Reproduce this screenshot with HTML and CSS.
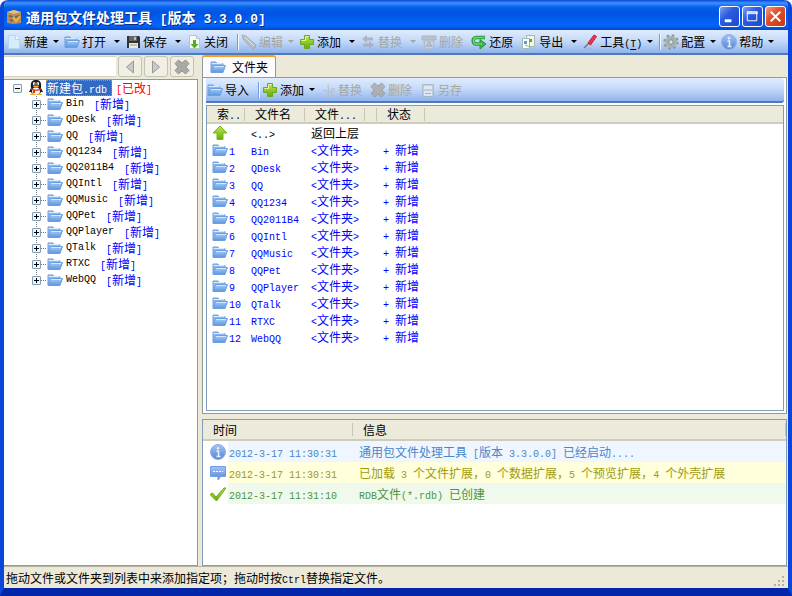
FILE: index.html
```html
<!DOCTYPE html>
<html lang="zh-CN">
<head>
<meta charset="UTF-8" />
<meta name="viewport" content="width=device-width, initial-scale=1" />
<title>通用包文件处理工具</title>
<link rel="stylesheet" href="styles.css">
</head>
<body>

<!-- Shared icons -->
<svg class="defs" aria-hidden="true">
  <defs>
    <linearGradient id="gFolder" x1="0" y1="0" x2="0" y2="1"><stop offset="0" stop-color="#a9cdf6"/><stop offset="1" stop-color="#5b96e0"/></linearGradient>
    <linearGradient id="gGreen" x1="0" y1="0" x2="0" y2="1"><stop offset="0" stop-color="#c3e64e"/><stop offset="1" stop-color="#5fae08"/></linearGradient>
    <linearGradient id="gInfo" x1="0" y1="0" x2="0" y2="1"><stop offset="0" stop-color="#a5c3f2"/><stop offset="1" stop-color="#5686d8"/></linearGradient>
  </defs>
  <symbol id="folder" viewBox="0 0 16 16">
    <path d="M1 13V3h5l1 1.500h6V7" fill="#8db8ee" stroke="#6c9fe0"/>
    <path d="M1.500 4.500h11" stroke="#d8e9fc"/>
    <path d="M1 13.500 3.500 6.500h12L13 13.500z" fill="url(#gFolder)" stroke="#6a9fe2"/>
    <path d="M4 7.500h10" stroke="#d4e7fd"/>
  </symbol>
  <symbol id="plus" viewBox="0 0 16 16">
    <path d="M5.500 1.500h5v4h4v5h-4v4h-5v-4h-4v-5h4z" fill="url(#gGreen)" stroke="#6da81c"/>
    <path d="M6.500 2.500h3M2.500 6.500h4v-4" stroke="#e3f5a0" fill="none"/>
  </symbol>
  <symbol id="cross" viewBox="0 0 16 16">
    <path d="M1 4.500 4.500 1 8 4l3.500-3L15 4.500 12 8l3 3.500-3.500 3.500L8 12l-3.500 3L1 11.500 4 8z" fill="#a9a9a5" stroke="#969692"/>
  </symbol>
  <symbol id="info" viewBox="0 0 16 16">
    <circle cx="8" cy="8" r="7.500" fill="url(#gInfo)" stroke="#8fb0e8"/>
    <path d="M6.500 7H8.500v5M6.500 12.500h4" stroke="#e8f1ff" stroke-width="1.500" fill="none"/><circle cx="8" cy="4.200" r="1.200" fill="#e8f1ff"/>
  </symbol>
</svg>

<div class="window">
  <header class="titlebar">
    <svg class="icon" viewBox="0 0 16 16"><path d="M1 3l7-2 7 2v11l-7 1-7-1z" fill="#b98f58"/><path d="M1 3l7 2 7-2-7-2z" fill="#e0c08b"/><path d="M3 7l4 1M9 8l5-1M4 11l3 1" stroke="#6d6a66" stroke-width="2"/><path d="M7 8l3 4 4-5" stroke="#f2b436" stroke-width="2" fill="none"/></svg>
    <h1>通用包文件处理工具<span class="en"> [</span>版本<span class="en"> 3.3.0.0]</span></h1>
    <div class="win-btns">
      <button class="win-btn" aria-label="最小化"><svg viewBox="0 0 20 20"><path d="M5 13h7v3H5z" fill="#fff"/></svg></button>
      <button class="win-btn" aria-label="最大化"><svg viewBox="0 0 20 20"><path d="M4.500 5.500h10v9h-10zM4 5h11v2H4" fill="none" stroke="#fff"/></svg></button>
      <button class="win-btn close" aria-label="关闭窗口"><svg viewBox="0 0 20 20"><path d="M5 5l10 10M15 5 5 15" stroke="#fff" stroke-width="2"/></svg></button>
    </div>
  </header>

  <nav class="toolbar">
    <button class="tool menu"><svg class="icon" viewBox="0 0 16 16"><path d="M2.500 1.500h7l4 4v9h-11z" fill="#d6ecfb" stroke="#b5d6f0"/><path d="M9.500 1.500v4h4" fill="#f4fbff" stroke="#b5d6f0"/></svg>新建</button>
    <button class="tool split"><svg class="icon"><use href="#folder"/></svg>打开</button>
    <button class="tool split"><svg class="icon" viewBox="0 0 16 16"><path d="M2 2h12l1 1v11H2z" fill="#333"/><path d="M4 2h8v5H4z" fill="#666"/><path d="M9 3h2v3H9z" fill="#bbb"/><path d="M4 9h9v5H4z" fill="#e8e8e8"/><path d="M5 11h7" stroke="#999"/></svg>保存</button>
    <button class="tool"><svg class="icon" viewBox="0 0 16 16"><path d="M3.500 1.500h7l3 3v10h-10z" fill="#f7faf7" stroke="#b9c6c4"/><path d="M10.500 1.500v3h3" fill="#dce6e8" stroke="#b9c6c4"/><path d="M7 6h3v4h2.500l-4 4.500-4-4.500H7z" fill="#4fb022"/></svg>关闭</button>
    <span class="sep"></span>
    <button class="tool menu" disabled><svg class="icon" viewBox="0 0 16 16"><path d="M1 1l4 1 10 9-1 3-3 .5L2 5z" fill="#b5b9bf" stroke="#9ea4ac"/><path d="M4 3l9 9" stroke="#e0e3e7"/></svg>编辑</button>
    <button class="tool split"><svg class="icon"><use href="#plus"/></svg>添加</button>
    <button class="tool split" disabled><svg class="icon" viewBox="0 0 16 16"><path d="M13 5H7M3 11h6" stroke="#a3adb9" stroke-width="3" fill="none"/><path d="M2 5l5-4v8zM14 11l-5-4v8z" fill="#a3adb9"/></svg>替换</button>
    <button class="tool" disabled><svg class="icon" viewBox="0 0 16 16"><path d="M1 2h14v4H1z" fill="#b5bbc3" stroke="#a5abb5"/><path d="M3 7h10l-1 8H4z" fill="#cdd3da" stroke="#a9b1bb"/><path d="M8 8l2.500 4h-5z" fill="none" stroke="#8e98a5"/></svg>删除</button>
    <button class="tool"><svg class="icon" viewBox="0 0 16 16"><path d="M14 3.500H5.500C1 3.500 1 10 5.500 10H10" fill="none" stroke="#249a35" stroke-width="3.500"/><path d="M9 5.500l6 4.500-6 5z" fill="#39b54a" stroke="#249a35"/><path d="M13.500 3.500H5.500C1.500 3.500 1.500 10 5.500 10H11" fill="none" stroke="#71d676" stroke-width="1.500"/></svg>还原</button>
    <button class="tool split"><svg class="icon" viewBox="0 0 16 16"><path d="M5.500 1.500h8v11h-8z" fill="#f1f5ef" stroke="#a9b9ad"/><path d="M1.500 4.500h7v10h-7z" fill="#fff" stroke="#a9b9ad"/><path d="M3 7h3v3H3z" fill="#4ba3e5"/><path d="M8 5h3v3H8z" fill="#4eb335"/><path d="M4 11l5 2" stroke="#7fc253"/></svg>导出</button>
    <button class="tool menu"><svg class="icon" viewBox="0 0 16 16"><path d="M2 14l6-6" stroke="#777" stroke-width="1.500"/><path d="M6 9l6-8 2.500 1.500L8.500 11z" fill="#e9374a" stroke="#c11f34"/><path d="M2 15h8" stroke="#a9b5c7"/></svg><span>工具<span class="en">(<u>T</u>)</span></span></button>
    <span class="sep"></span>
    <button class="tool menu"><svg class="icon" viewBox="0 0 16 16"><circle cx="8" cy="8" r="6.500" fill="none" stroke="#8f9994" stroke-width="2.500" stroke-dasharray="2.500 2.600"/><circle cx="8" cy="8" r="4.300" fill="none" stroke="#a9b1ac" stroke-width="3.500"/><circle cx="8" cy="8" r="2.300" fill="#cfe0f5" stroke="#7f8985"/></svg>配置</button>
    <button class="tool menu"><svg class="icon"><use href="#info"/></svg>帮助</button>
  </nav>

  <main class="work">
    <aside class="side">
      <div class="search">
        <input type="text" aria-label="搜索">
        <button aria-label="上一个"><svg viewBox="0 0 16 16"><path d="M11.500 2v12l-7-6z" fill="#c9c9c6" stroke="#999"/></svg></button>
        <button aria-label="下一个"><svg viewBox="0 0 16 16"><path d="M4.500 2v12l7-6z" fill="#c9c9c6" stroke="#999"/></svg></button>
        <button aria-label="清除"><svg><use href="#cross"/></svg></button>
      </div>
      <div class="tree">
        <div class="node root">
          <button class="expander open" aria-label="折叠"></button>
          <svg class="icon" viewBox="0 0 16 16"><path d="M3 8C2 1 5 0 8 0s6 1 5 8l2 4-2 0c-1 3-9 3-10 0l-2 0z" fill="#1d1d1d"/><ellipse cx="8" cy="11" rx="4" ry="3.500" fill="#fff"/><ellipse cx="6.200" cy="3.800" rx="1.300" ry="1.800" fill="#fff"/><ellipse cx="9.800" cy="3.800" rx="1.300" ry="1.800" fill="#fff"/><circle cx="6.500" cy="4" r=".6"/><circle cx="9.500" cy="4" r=".6"/><ellipse cx="8" cy="6.500" rx="3" ry="1" fill="#f7a71c"/><path d="M3 8c3 2 7 2 10 0v1.500c-2 1.500-5 1.500-6 1.200V13H5v-2.500L3 9.500z" fill="#e3291c"/><path d="M2 15c0-2 5-2 5.500 0zM8.500 15c.5-2 5.500-2 5.500 0z" fill="#f7a71c"/></svg>
          <span class="selected">新建包<span class="en">.rdb</span></span>
          <span class="changed"><span class="en">[</span>已改<span class="en">]</span></span>
        </div>
        <ul>
          <li class="node"><button class="expander" aria-label="展开"></button><svg class="icon"><use href="#folder"/></svg><span class="en">Bin</span><span class="added"><span class="en">[</span>新增<span class="en">]</span></span></li>
          <li class="node"><button class="expander" aria-label="展开"></button><svg class="icon"><use href="#folder"/></svg><span class="en">QDesk</span><span class="added"><span class="en">[</span>新增<span class="en">]</span></span></li>
          <li class="node"><button class="expander" aria-label="展开"></button><svg class="icon"><use href="#folder"/></svg><span class="en">QQ</span><span class="added"><span class="en">[</span>新增<span class="en">]</span></span></li>
          <li class="node"><button class="expander" aria-label="展开"></button><svg class="icon"><use href="#folder"/></svg><span class="en">QQ1234</span><span class="added"><span class="en">[</span>新增<span class="en">]</span></span></li>
          <li class="node"><button class="expander" aria-label="展开"></button><svg class="icon"><use href="#folder"/></svg><span class="en">QQ2011B4</span><span class="added"><span class="en">[</span>新增<span class="en">]</span></span></li>
          <li class="node"><button class="expander" aria-label="展开"></button><svg class="icon"><use href="#folder"/></svg><span class="en">QQIntl</span><span class="added"><span class="en">[</span>新增<span class="en">]</span></span></li>
          <li class="node"><button class="expander" aria-label="展开"></button><svg class="icon"><use href="#folder"/></svg><span class="en">QQMusic</span><span class="added"><span class="en">[</span>新增<span class="en">]</span></span></li>
          <li class="node"><button class="expander" aria-label="展开"></button><svg class="icon"><use href="#folder"/></svg><span class="en">QQPet</span><span class="added"><span class="en">[</span>新增<span class="en">]</span></span></li>
          <li class="node"><button class="expander" aria-label="展开"></button><svg class="icon"><use href="#folder"/></svg><span class="en">QQPlayer</span><span class="added"><span class="en">[</span>新增<span class="en">]</span></span></li>
          <li class="node"><button class="expander" aria-label="展开"></button><svg class="icon"><use href="#folder"/></svg><span class="en">QTalk</span><span class="added"><span class="en">[</span>新增<span class="en">]</span></span></li>
          <li class="node"><button class="expander" aria-label="展开"></button><svg class="icon"><use href="#folder"/></svg><span class="en">RTXC</span><span class="added"><span class="en">[</span>新增<span class="en">]</span></span></li>
          <li class="node"><button class="expander" aria-label="展开"></button><svg class="icon"><use href="#folder"/></svg><span class="en">WebQQ</span><span class="added"><span class="en">[</span>新增<span class="en">]</span></span></li>
        </ul>
      </div>
    </aside>

    <section class="content">
      <button class="tab"><svg class="icon"><use href="#folder"/></svg>文件夹</button>
      <div class="page">
        <div class="toolbar inner">
          <button class="tool"><svg class="icon"><use href="#folder"/></svg>导入</button>
          <span class="sep"></span>
          <button class="tool menu"><svg class="icon"><use href="#plus"/></svg>添加</button>
          <button class="tool" disabled><svg class="icon" viewBox="0 0 16 16"><path d="M8 2l1 8M3 8l8 2" stroke="#b5c0cd" stroke-width="1.500"/><circle cx="10" cy="12" r="2" fill="none" stroke="#b5c0cd" stroke-width="1.500"/><circle cx="13" cy="8" r="1.500" fill="none" stroke="#b5c0cd" stroke-width="1.500"/></svg>替换</button>
          <button class="tool" disabled><svg class="icon"><use href="#cross"/></svg>删除</button>
          <button class="tool" disabled><svg class="icon" viewBox="0 0 16 16"><path d="M2.500 2.500h11v12h-11z" fill="#c3cad3" stroke="#a9b3bf"/><path d="M4 4h8v3H4zM4 9h8v5H4z" fill="#e6ecf3"/><path d="M5 11.500h6" stroke="#a9b3bf"/></svg>另存</button>
        </div>
        <div class="list">
          <table class="files">
            <colgroup><col class="c-index"><col class="c-name"><col class="c-type"><col class="c-blank"><col class="c-state"><col></colgroup>
            <thead>
              <tr><th>索<span class="en">..</span></th><th>文件名</th><th>文件<span class="en">...</span></th><th></th><th>状态</th><th></th></tr>
            </thead>
            <tbody>
              <tr class="up"><td><svg class="icon" viewBox="0 0 16 16"><path d="M8 1l7 7h-4v6.500H5V8H1z" fill="url(#gGreen)" stroke="#78b81c"/></svg></td><td><span class="en">&lt;..&gt;</span></td><td>返回上层</td><td></td><td></td><td></td></tr>
              <tr><td><svg class="icon"><use href="#folder"/></svg><span class="en">1</span></td><td><span class="en">Bin</span></td><td><span class="en">&lt;</span>文件夹<span class="en">&gt;</span></td><td></td><td><span class="en">+ </span>新增</td><td></td></tr>
              <tr><td><svg class="icon"><use href="#folder"/></svg><span class="en">2</span></td><td><span class="en">QDesk</span></td><td><span class="en">&lt;</span>文件夹<span class="en">&gt;</span></td><td></td><td><span class="en">+ </span>新增</td><td></td></tr>
              <tr><td><svg class="icon"><use href="#folder"/></svg><span class="en">3</span></td><td><span class="en">QQ</span></td><td><span class="en">&lt;</span>文件夹<span class="en">&gt;</span></td><td></td><td><span class="en">+ </span>新增</td><td></td></tr>
              <tr><td><svg class="icon"><use href="#folder"/></svg><span class="en">4</span></td><td><span class="en">QQ1234</span></td><td><span class="en">&lt;</span>文件夹<span class="en">&gt;</span></td><td></td><td><span class="en">+ </span>新增</td><td></td></tr>
              <tr><td><svg class="icon"><use href="#folder"/></svg><span class="en">5</span></td><td><span class="en">QQ2011B4</span></td><td><span class="en">&lt;</span>文件夹<span class="en">&gt;</span></td><td></td><td><span class="en">+ </span>新增</td><td></td></tr>
              <tr><td><svg class="icon"><use href="#folder"/></svg><span class="en">6</span></td><td><span class="en">QQIntl</span></td><td><span class="en">&lt;</span>文件夹<span class="en">&gt;</span></td><td></td><td><span class="en">+ </span>新增</td><td></td></tr>
              <tr><td><svg class="icon"><use href="#folder"/></svg><span class="en">7</span></td><td><span class="en">QQMusic</span></td><td><span class="en">&lt;</span>文件夹<span class="en">&gt;</span></td><td></td><td><span class="en">+ </span>新增</td><td></td></tr>
              <tr><td><svg class="icon"><use href="#folder"/></svg><span class="en">8</span></td><td><span class="en">QQPet</span></td><td><span class="en">&lt;</span>文件夹<span class="en">&gt;</span></td><td></td><td><span class="en">+ </span>新增</td><td></td></tr>
              <tr><td><svg class="icon"><use href="#folder"/></svg><span class="en">9</span></td><td><span class="en">QQPlayer</span></td><td><span class="en">&lt;</span>文件夹<span class="en">&gt;</span></td><td></td><td><span class="en">+ </span>新增</td><td></td></tr>
              <tr><td><svg class="icon"><use href="#folder"/></svg><span class="en">10</span></td><td><span class="en">QTalk</span></td><td><span class="en">&lt;</span>文件夹<span class="en">&gt;</span></td><td></td><td><span class="en">+ </span>新增</td><td></td></tr>
              <tr><td><svg class="icon"><use href="#folder"/></svg><span class="en">11</span></td><td><span class="en">RTXC</span></td><td><span class="en">&lt;</span>文件夹<span class="en">&gt;</span></td><td></td><td><span class="en">+ </span>新增</td><td></td></tr>
              <tr><td><svg class="icon"><use href="#folder"/></svg><span class="en">12</span></td><td><span class="en">WebQQ</span></td><td><span class="en">&lt;</span>文件夹<span class="en">&gt;</span></td><td></td><td><span class="en">+ </span>新增</td><td></td></tr>
            </tbody>
          </table>
        </div>
      </div>

      <div class="log">
        <table>
          <colgroup><col class="c-icon"><col class="c-time"><col></colgroup>
          <thead>
            <tr><th colspan="2">时间</th><th>信息</th></tr>
          </thead>
          <tbody>
            <tr class="info"><td><svg class="icon"><use href="#info"/></svg></td><td><span class="en">2012-3-17 11:30:31</span></td><td>通用包文件处理工具<span class="en"> [</span>版本<span class="en"> 3.3.0.0] </span>已经启动<span class="en">....</span></td></tr>
            <tr class="loaded"><td><svg class="icon" viewBox="0 0 16 16"><path d="M.5 1.500h15v10h-5L8 15v-3.500H.5z" fill="url(#gInfo)" stroke="#6f9ce6"/><path d="M3 6.500h10" stroke="#fff" stroke-dasharray="2 1"/></svg></td><td><span class="en">2012-3-17 11:30:31</span></td><td>已加载<span class="en"> 3 </span>个文件扩展，<span class="en">0 </span>个数据扩展，<span class="en">5 </span>个预览扩展，<span class="en">4 </span>个外壳扩展</td></tr>
            <tr class="done"><td><svg class="icon" viewBox="0 0 16 16"><path d="M0 8.500 2.500 7 6 11l8-9 2 0L6.500 15z" fill="url(#gGreen)" stroke="#6dab12"/></svg></td><td><span class="en">2012-3-17 11:31:10</span></td><td><span class="en">RDB</span>文件<span class="en">(*.rdb) </span>已创建</td></tr>
          </tbody>
        </table>
      </div>
    </section>
  </main>

  <footer class="statusbar">
    <span>拖动文件或文件夹到列表中来添加指定项；拖动时按<span class="en">Ctrl</span>替换指定文件。</span>
    <svg class="grip" viewBox="0 0 12 12"><path d="M8 0h2v2H8zM4 4h2v2H4zM8 4h2v2H8zM0 8h2v2H0zM4 8h2v2H4zM8 8h2v2H8z" fill="#b5b19d"/></svg>
  </footer>
</div>

</body>
</html>
```

FILE: styles.css
```css
* {
  box-sizing: border-box;
}

body {
  margin: 0;
  background: #fff;
  font: 12px/16px "Noto Sans CJK SC", sans-serif;
  color: #000;
}

button, input {
  font: inherit;
  color: inherit;
  margin: 0;
  padding: 0;
}

.defs {
  position: absolute;
  width: 0;
  height: 0;
}

.icon {
  width: 16px;
  height: 16px;
  flex: none;
}

/* Latin text is half as wide as a Chinese character */
.en {
  font-family: "Liberation Mono", monospace;
  font-size: 10px;
  line-height: 10px;
  white-space: pre;
}

u {
  text-underline-offset: 2px;
}

/* Window frame */
.window {
  display: flex;
  flex-direction: column;
  height: 100vh;
  border: 4px solid #0a45dc;
  border-width: 0 4px 8px;
  border-bottom-color: #0326a8;
  border-radius: 8px 8px 0 0;
  background: #ece9d8;
  overflow: hidden;
}

.titlebar {
  display: flex;
  flex: none;
  align-items: center;
  gap: 4px;
  height: 30px;
  margin: 0 -4px;
  padding: 3px 6px 0;
  background: linear-gradient(#0a45d6, #3c92ff 3px, #0560ec 7px, #0054e3 14px, #0366fd 25px, #0148d0);
}

.titlebar h1 {
  flex: 1;
  margin: 0;
  font-size: 14px;
  line-height: 20px;
  color: #fff;
  text-shadow: 1px 1px #0a2a80;
}

.titlebar h1 .en {
  font-size: 13px;
}

.win-btns {
  display: flex;
  gap: 2px;
}

.win-btn {
  width: 21px;
  height: 21px;
  border: 1px solid #fff;
  border-radius: 3px;
  background: linear-gradient(135deg, #7da2f2, #2a5be0 40%, #1c49cf);
}

.win-btn.close {
  background: linear-gradient(135deg, #f0a088, #e2502a 40%, #c63a12);
}

.win-btn svg {
  display: block;
  width: 19px;
  height: 19px;
}

/* Toolbars */
.toolbar {
  display: flex;
  flex: none;
  height: 25px;
  padding-left: 2px;
  border-bottom: 2px solid #5078bd;
  background: linear-gradient(#e0ecfe, #c3d8f8 50%, #8fb3ec);
}

.tool {
  display: flex;
  align-items: center;
  gap: 2px;
  padding-right: 8px;
  border: 0;
  background: none;
  white-space: nowrap;
}

.tool:disabled {
  color: #a5a69f;
}

.tool:disabled .icon {
  opacity: 0.8;
}

.tool.menu, .tool.split {
  padding-right: 5px;
}

.tool.menu::after, .tool.split::after {
  content: "";
  margin-left: 3px;
  border: 3px solid transparent;
  border-top-color: currentColor;
  border-bottom: 0;
}

.tool.split::after {
  margin-left: 6px;
}

.sep {
  width: 2px;
  height: 16px;
  margin: 4px 2px 0 1px;
  border-left: 1px solid #6f9be0;
  border-right: 1px solid #f4f8ff;
}

/* Left side */
.work {
  display: flex;
  flex: 1;
  gap: 4px;
  min-height: 0;
}

.side {
  display: flex;
  flex-direction: column;
  gap: 2px;
  width: 194px;
}

.search {
  display: flex;
  gap: 2px;
  height: 22px;
  padding: 1px 4px 0 0;
}

.search input {
  flex: 1;
  min-width: 0;
  border: 1px solid #d5d2c3;
  border-width: 1px 0;
  background: #fff;
}

.search button {
  width: 24px;
  border: 1px solid #c5c2b2;
  border-radius: 3px;
  background: #f1efe4;
}

.search svg {
  display: block;
  width: 16px;
  height: 16px;
  margin: auto;
}

.tree {
  flex: 1;
  border: 1px solid #7f9db9;
  border-left: 0;
  background: #fff;
  overflow: hidden;
}

.tree ul {
  margin: 0 0 0 28px;
  padding: 0;
  list-style: none;
}

.node {
  display: flex;
  align-items: center;
  height: 16px;
  white-space: nowrap;
}

.node.root {
  padding-left: 9px;
}

.expander {
  width: 9px;
  height: 9px;
  border: 1px solid #7f9db9;
  border-radius: 1px;
  background:
    linear-gradient(#000, #000) center / 5px 1px no-repeat,
    linear-gradient(#000, #000) center / 1px 5px no-repeat,
    #f5f4ee;
}

.expander.open {
  margin-right: 6px;
  background: linear-gradient(#000, #000) center / 5px 1px no-repeat, #f5f4ee;
}

/* Dotted branch lines */
.tree li {
  background: repeating-linear-gradient(#777 0 1px, transparent 1px 2px) 4px 0 / 1px 16px no-repeat;
}

.tree li:last-child {
  background-size: 1px 8px;
}

.tree li::before {
  content: "";
  order: 1;
  width: 5px;
  margin-right: 1px;
  border-top: 1px dotted #777;
}

.tree li > :not(.expander) {
  order: 2;
}

.tree li > .icon + .en {
  margin-left: 3px;
}

.selected {
  margin-left: 2px;
  padding: 0 5px 0 1px;
  outline: 1px dotted #d08a3a;
  outline-offset: -1px;
  background: #316ac5;
  color: #fff;
}

.changed {
  margin-left: 4px;
  color: #f00;
}

.added {
  margin-left: 10px;
  color: #00f;
}

/* Folder page */
.content {
  display: flex;
  flex: 1;
  flex-direction: column;
  min-width: 0;
  padding-right: 1px;
}

.tab {
  display: flex;
  flex: none;
  align-self: flex-start;
  align-items: center;
  gap: 6px;
  height: 22px;
  padding: 0 7px;
  border: 1px solid #919b9c;
  border-width: 2px 1px 0;
  border-top-color: #f9a01b;
  border-radius: 3px 3px 0 0;
  background: #fcfcfe;
}

.page {
  display: flex;
  flex: 1;
  flex-direction: column;
  gap: 2px;
  padding: 0 2px 2px 3px;
  border: 1px solid #919b9c;
  background: #fcfcfe;
}

.toolbar.inner {
  padding-left: 1px;
  border-radius: 0 3px 3px 0;
}

.list {
  flex: 1;
  border: 1px solid #7f9db9;
  background: #fff;
  overflow: hidden;
}

table {
  width: 100%;
  border-collapse: separate;
  border-spacing: 0;
  table-layout: fixed;
}

th {
  height: 18px;
  padding: 0 0 0 10px;
  border-bottom: 2px solid #d0ccbb;
  background: linear-gradient(#c9c5b4, #c9c5b4) right center / 1px 13px no-repeat, #ebeadb;
  font-weight: normal;
  text-align: left;
  white-space: nowrap;
}

td {
  padding: 0 0 0 6px;
  white-space: nowrap;
}

td .icon {
  display: inline-block;
  margin-right: 1px;
  vertical-align: top;
}

.c-index {
  width: 38px;
}

.c-name, .c-type {
  width: 60px;
}

.c-blank {
  width: 12px;
}

.c-state {
  width: 48px;
}

.files td {
  height: 17px;
  color: #00f;
}

.files td:first-child {
  padding-left: 5px;
}

.files .up td {
  color: #000;
}

.files th:last-child {
  background: #ebeadb;
}

/* Message log */
.log {
  height: 147px;
  margin-top: 5px;
  border: 1px solid #7f9db9;
  background: #fff;
  overflow: hidden;
}

.log th, .log td {
  height: 21px;
}

.log td:first-child {
  padding-left: 7px;
  background: #fff;
}

.log td:nth-child(2) {
  padding-left: 1px;
}

.c-icon {
  width: 25px;
}

.c-time {
  width: 125px;
}

.log .info {
  background: #eff6ff;
  color: #4a86c8;
}

.log .loaded {
  background: #ffffdc;
  color: #a09a10;
}

.log .done {
  background: #effaec;
  color: #4f9440;
}

.statusbar {
  display: flex;
  flex: none;
  align-items: center;
  justify-content: space-between;
  height: 22px;
  padding: 0 2px;
  border-top: 1px solid #b5b2a2;
}

.grip {
  align-self: flex-end;
  width: 12px;
  height: 12px;
}
```
